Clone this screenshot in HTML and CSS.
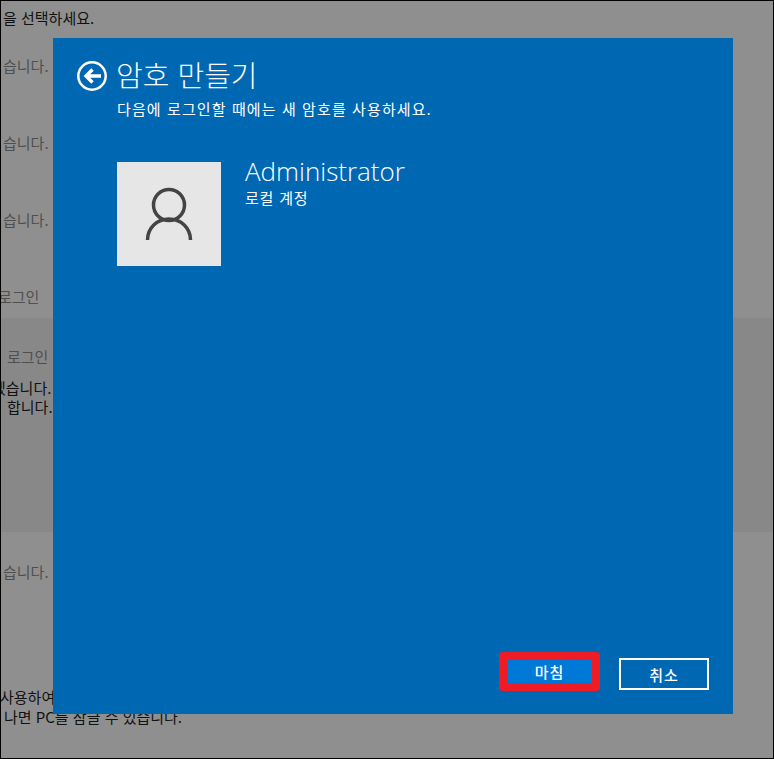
FILE: index.html
```html
<!DOCTYPE html>
<html lang="ko">
<head>
<meta charset="utf-8">
<title>암호 만들기</title>
<link rel="stylesheet" href="styles.css">
</head>
<body>
<div class="frame">
  <div class="backdrop">
    <div class="line dark top-line">을 선택하세요.</div>
    <div class="line muted gap-a">습니다.</div>
    <div class="line muted gap-b">습니다.</div>
    <div class="line muted gap-b">습니다.</div>
    <div class="line muted gap-b login-a">로그인</div>
    <div class="band">
      <div class="line muted login-b">로그인</div>
      <div class="line dark tail-a">겠습니다.</div>
      <div class="line dark tail-b">합니다.</div>
    </div>
    <div class="line muted gap-c">습니다.</div>
    <div class="line dark use-line">사용하여</div>
    <div class="line dark last-line">나면 PC를 잠글 수 있습니다.</div>
  </div>
  <section class="dialog">
    <header class="head">
      <svg class="back" viewBox="0 0 30 30" aria-hidden="true">
        <circle cx="15" cy="15" r="13.700" fill="none" stroke="#fff" stroke-width="2.500"/>
        <path d="M24 15H9M15.500 8.500L9 15l6.500 6.500" fill="none" stroke="#fff" stroke-width="3.400"/>
      </svg>
      <h1 class="title">암호 만들기</h1>
    </header>
    <p class="subtitle">다음에 로그인할 때에는 새 암호를 사용하세요.</p>
    <div class="account">
      <div class="avatar">
        <svg class="avatar-icon" viewBox="0 0 48 54" aria-hidden="true">
          <circle cx="24" cy="18" r="15.500" fill="none" stroke="#444" stroke-width="3.500"/>
          <path d="M2.500 53C2.500 41 12 32 24 32s21.500 9 21.500 21" fill="none" stroke="#444" stroke-width="3.500"/>
        </svg>
      </div>
      <div class="who">
        <div class="name">Administrator</div>
        <div class="kind">로컬 계정</div>
      </div>
    </div>
    <footer class="actions">
      <button class="btn primary">마침</button>
      <button class="btn secondary">취소</button>
    </footer>
  </section>
</div>
</body>
</html>
```
FILE: styles.css
```css
* { box-sizing: border-box; }
html, body { margin: 0; padding: 0; }
body { width: 774px; height: 759px; overflow: hidden; font-family: "Noto Sans CJK KR", "Noto Sans", sans-serif; }

.frame {
  position: relative;
  width: 774px;
  height: 759px;
  border: 1px solid #000;
  background: #8f8f8f;
  overflow: hidden;
}

.backdrop { display: flex; flex-direction: column; font-size: 15px; }
.line { height: 20px; line-height: 20px; white-space: nowrap; padding-left: 2px; }
.dark { color: #111; }
.muted { color: #4f4f4f; }
.top-line { margin-top: 7px; }
.gap-a { margin-top: 28px; }
.gap-b { margin-top: 57px; }
.login-a { margin-left: -5px; }
.band {
  margin-top: 11px;
  height: 214px;
  background: #888;
  display: flex;
  flex-direction: column;
}
.login-b { margin-top: 29px; margin-left: -18px; padding-left: 24px; }
.tail-a { margin-top: 11px; margin-left: -11px; }
.tail-b { margin-top: -1px; margin-left: 4px; }
.gap-c { margin-top: 30px; }
.use-line { margin-top: 105px; padding-left: 0; margin-left: -1px; }
.last-line { padding-left: 3px; }

.dialog {
  position: absolute;
  left: 52px;
  top: 37px;
  width: 680px;
  height: 676px;
  background: #0067b3;
  color: #fff;
  padding: 20px 24px 23px 24px;
  display: flex;
  flex-direction: column;
}
.head { display: flex; align-items: center; height: 36px; }
.back { width: 30px; height: 30px; flex: none; }
.title { margin: -4px 0 0 9px; font-size: 29px; font-weight: 300; line-height: 36px; letter-spacing: 0; }
.subtitle { margin: 5px 0 0 40px; font-size: 15px; line-height: 20px; font-weight: 400; letter-spacing: 1.1px; }
.account { display: flex; margin: 43px 0 0 40px; gap: 24px; flex: 1; }
.avatar {
  width: 104px;
  height: 104px;
  background: #e6e6e6;
  display: flex;
  align-items: center;
  justify-content: center;
}
.avatar-icon { width: 48px; height: 54px; }
.who { display: flex; flex-direction: column; }
.name { font-size: 26px; font-weight: 300; line-height: 30px; font-family: "Open Sans", "Noto Sans", sans-serif; margin-top: -6px; }
.kind { font-size: 15px; line-height: 20px; margin-top: 2px; letter-spacing: 0.8px; }

.actions { display: flex; justify-content: flex-end; align-items: flex-end; }
.btn { font-family: inherit; font-size: 15px; font-weight: 500; letter-spacing: 1px; color: #fff; padding: 0; }
.primary {
  width: 101px;
  height: 39px;
  border: 8px solid #ee1c25;
  border-radius: 4px;
  background: #0078d7;
}
.secondary {
  width: 90px;
  height: 32px;
  margin: 0 0 1px 19px;
  border: 2px solid #fff;
  background: transparent;
}
```
